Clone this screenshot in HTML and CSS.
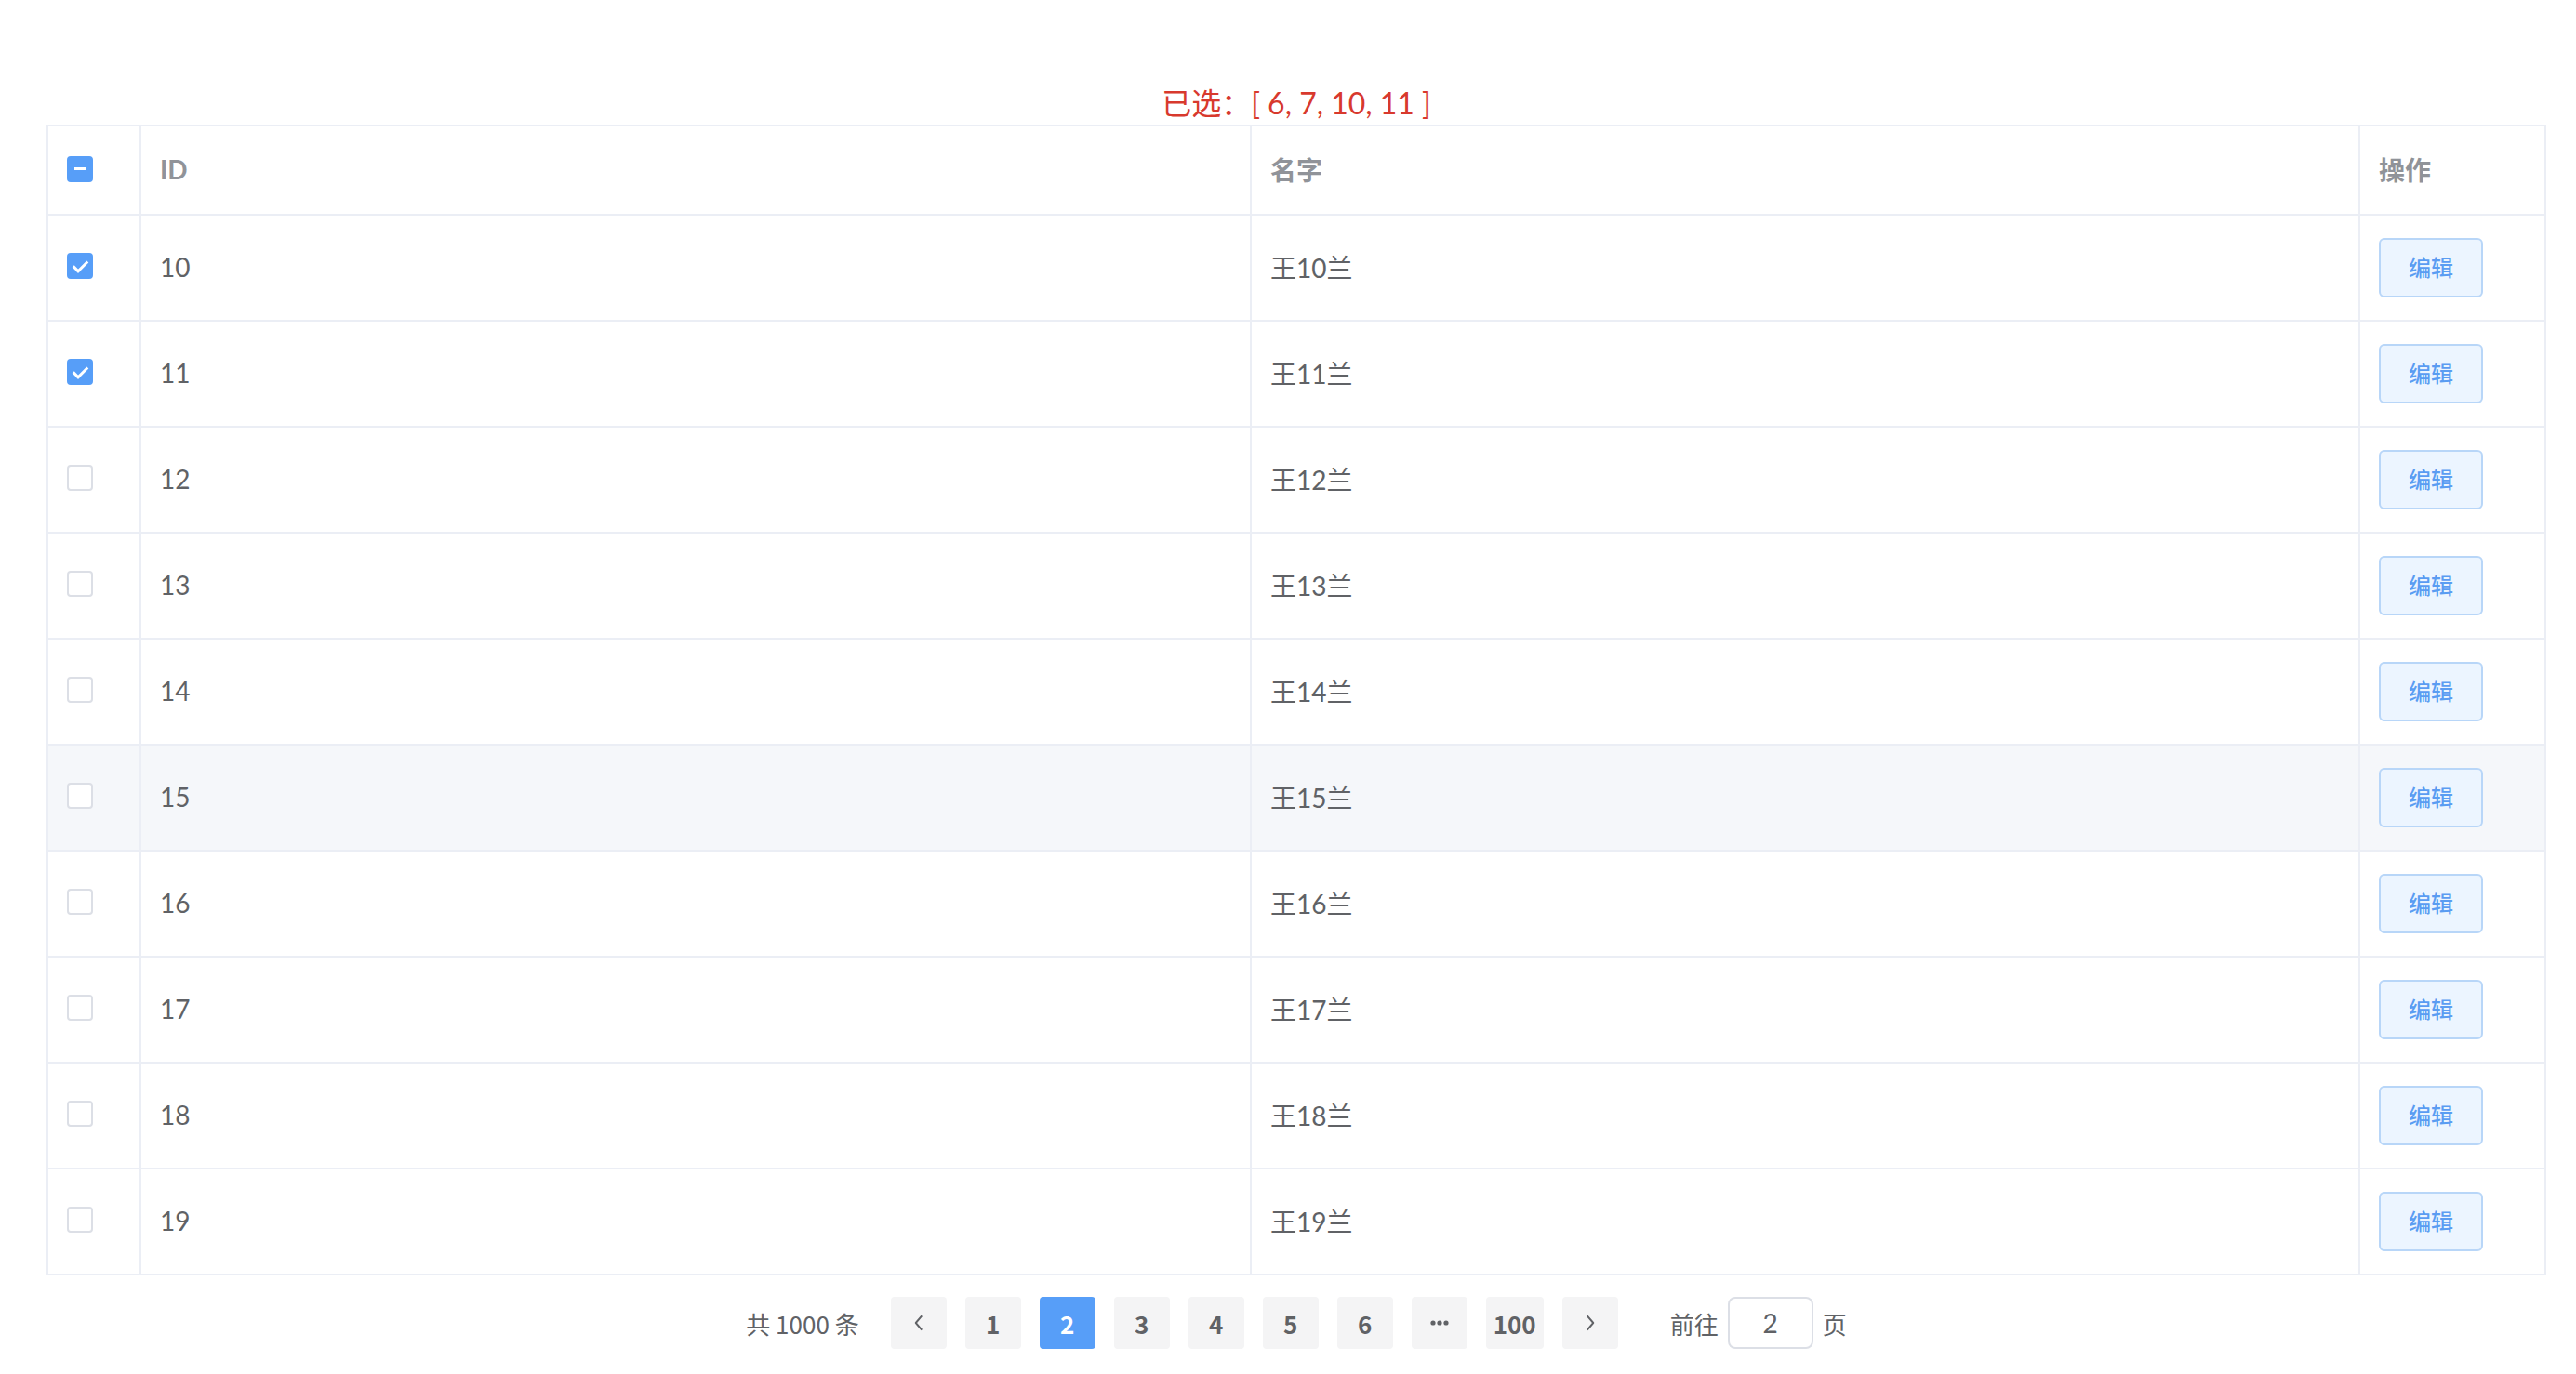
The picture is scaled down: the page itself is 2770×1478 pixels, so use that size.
FILE: index.html
```html
<!DOCTYPE html>
<html lang="zh-CN">
<head>
<meta charset="utf-8">
<title>Table</title>
<link rel="stylesheet" href="styles.css">
</head>
<body>
<div class="page">
  <div class="selected">已选：[ 6, 7, 10, 11 ]</div>
  <table class="grid">
    <thead>
      <tr>
        <th class="c-sel"><span class="chk is-indeterminate"></span></th>
        <th class="c-id">ID</th>
        <th class="c-name">名字</th>
        <th class="c-op">操作</th>
      </tr>
    </thead>
    <tbody>
      <tr><td><span class="chk is-checked"></span></td><td>10</td><td>王10兰</td><td><button class="btn">编辑</button></td></tr>
      <tr><td><span class="chk is-checked"></span></td><td>11</td><td>王11兰</td><td><button class="btn">编辑</button></td></tr>
      <tr><td><span class="chk"></span></td><td>12</td><td>王12兰</td><td><button class="btn">编辑</button></td></tr>
      <tr><td><span class="chk"></span></td><td>13</td><td>王13兰</td><td><button class="btn">编辑</button></td></tr>
      <tr><td><span class="chk"></span></td><td>14</td><td>王14兰</td><td><button class="btn">编辑</button></td></tr>
      <tr class="is-hover"><td><span class="chk"></span></td><td>15</td><td>王15兰</td><td><button class="btn">编辑</button></td></tr>
      <tr><td><span class="chk"></span></td><td>16</td><td>王16兰</td><td><button class="btn">编辑</button></td></tr>
      <tr><td><span class="chk"></span></td><td>17</td><td>王17兰</td><td><button class="btn">编辑</button></td></tr>
      <tr><td><span class="chk"></span></td><td>18</td><td>王18兰</td><td><button class="btn">编辑</button></td></tr>
      <tr><td><span class="chk"></span></td><td>19</td><td>王19兰</td><td><button class="btn">编辑</button></td></tr>
    </tbody>
  </table>
  <div class="pager">
    <span class="total">共 1000 条</span>
    <button class="pg arrow" aria-label="上一页"><svg viewBox="0 0 24 24" width="26" height="26"><path d="M15 5 L9 12 L15 19" fill="none" stroke="#606266" stroke-width="1.8" stroke-linejoin="round"/></svg></button>
    <button class="pg">1</button>
    <button class="pg active">2</button>
    <button class="pg">3</button>
    <button class="pg">4</button>
    <button class="pg">5</button>
    <button class="pg">6</button>
    <button class="pg more" aria-label="更多"><svg viewBox="0 0 20 6" width="20" height="6"><circle cx="3" cy="3" r="2.6" fill="#606266"/><circle cx="10" cy="3" r="2.6" fill="#606266"/><circle cx="17" cy="3" r="2.6" fill="#606266"/></svg></button>
    <button class="pg">100</button>
    <button class="pg arrow" aria-label="下一页"><svg viewBox="0 0 24 24" width="26" height="26"><path d="M9 5 L15 12 L9 19" fill="none" stroke="#606266" stroke-width="1.8" stroke-linejoin="round"/></svg></button>
    <span class="jump">前往<span class="jump-input">2</span>页</span>
  </div>
</div>
</body>
</html>
```

FILE: styles.css
```css
html, body {
  margin: 0;
  padding: 0;
  background: #ffffff;
}

body {
  font-family: Lato, "Noto Sans CJK SC", sans-serif;
  color: #606266;
}

.page {
  padding: 91px 32px 0 50px;
}

.selected {
  width: 2688px;
  height: 40px;
  line-height: 40px;
  margin-bottom: 3px;
  text-align: center;
  font-size: 32px;
  color: #d8392d;
}

.grid {
  width: 2688px;
  table-layout: fixed;
  border-collapse: separate;
  border-spacing: 0;
  border-top: 2px solid #ebeef5;
  border-left: 2px solid #ebeef5;
  font-size: 28px;
}

.grid th,
.grid td {
  box-sizing: border-box;
  padding: 0 20px 3px;
  border-right: 2px solid #ebeef5;
  border-bottom: 2px solid #ebeef5;
  text-align: left;
  vertical-align: middle;
}

.grid th {
  height: 96px;
  color: #909399;
  font-weight: 700;
}

.grid td {
  height: 114px;
  color: #606266;
}

.grid .c-sel { width: 100px; }
.grid .c-id { width: 1194px; }
.grid .c-name { width: 1192px; }
.grid .c-op { width: 200px; }

.grid tr.is-hover td {
  background: #f5f7fa;
}

.grid th:first-child {
  padding-bottom: 2px;
}

.grid td:first-child {
  padding-bottom: 5px;
}

.grid td:last-child {
  padding-bottom: 1px;
}

.chk {
  position: relative;
  display: block;
  box-sizing: border-box;
  width: 28px;
  height: 28px;
  border: 2px solid #dcdfe6;
  border-radius: 4px;
  background: #ffffff;
}

.chk.is-checked,
.chk.is-indeterminate {
  background: #579ef8;
  border-color: #579ef8;
}

.chk.is-checked::after {
  content: "";
  position: absolute;
  left: 8px;
  top: 3px;
  width: 6px;
  height: 13px;
  border-right: 3px solid #ffffff;
  border-bottom: 3px solid #ffffff;
  transform: rotate(45deg);
}

.chk.is-indeterminate::before {
  content: "";
  position: absolute;
  left: 6px;
  right: 6px;
  top: 10px;
  height: 3px;
  background: #ffffff;
}

.btn {
  display: block;
  box-sizing: border-box;
  width: 112px;
  height: 64px;
  padding: 0 0 2px;
  border: 2px solid #b8d6f8;
  border-radius: 6px;
  background: #ecf5ff;
  color: #5a9cf2;
  font-family: "Noto Sans CJK SC", sans-serif;
  font-size: 24px;
  font-weight: 500;
}

.pager {
  width: 2688px;
  margin-top: 23px;
  display: flex;
  justify-content: center;
  align-items: center;
  height: 56px;
  font-size: 26px;
  color: #606266;
}

.total {
  margin-right: 24px;
  font-family: "Noto Sans CJK SC", sans-serif;
}

.pg {
  box-sizing: border-box;
  min-width: 60px;
  height: 56px;
  margin: 0 10px;
  padding: 0 8px;
  border: 0;
  border-radius: 4px;
  background: #f4f4f5;
  color: #606266;
  font-family: "Noto Sans CJK SC", sans-serif;
  font-size: 26px;
  font-weight: 700;
  display: flex;
  align-items: center;
  justify-content: center;
}

.pg.active {
  background: #579ef8;
  color: #ffffff;
}

.jump {
  margin-left: 46px;
  display: flex;
  align-items: center;
  font-family: "Noto Sans CJK SC", sans-serif;
}

.jump-input {
  box-sizing: border-box;
  width: 92px;
  height: 56px;
  margin: 0 10px;
  border: 2px solid #dcdfe6;
  border-radius: 8px;
  display: flex;
  align-items: center;
  justify-content: center;
  font-family: Lato, sans-serif;
  font-size: 28px;
  color: #606266;
}
```
